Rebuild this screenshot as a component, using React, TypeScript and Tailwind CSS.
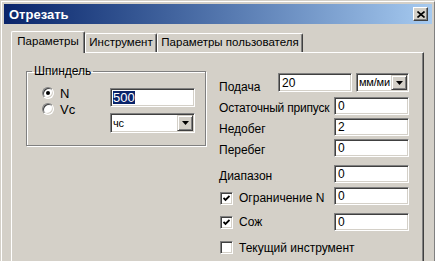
import type { ReactNode } from 'react'

const sunken =
  'bg-white border border-t-[#808080] border-l-[#808080] border-r-white border-b-white shadow-[inset_1px_1px_0_#404040,inset_-1px_-1px_0_#d4d0c8]'

function TextBox({ value, className = '' }: { value: string; className?: string }) {
  return (
    <div className={`${sunken} shrink-0 flex items-center pl-[3px] leading-none ${className}`}>
      <span>{value}</span>
    </div>
  )
}

function DropArrow() {
  return (
    <div className="w-[16px] shrink-0 h-full flex items-center justify-center bg-[#d4d0c8] border border-t-[#d4d0c8] border-l-[#d4d0c8] border-r-[#404040] border-b-[#404040] shadow-[inset_1px_1px_0_white,inset_-1px_-1px_0_#808080]">
      <svg width="7" height="4" viewBox="0 0 7 4">
        <path d="M0 0h7L3.5 4z" fill="black" />
      </svg>
    </div>
  )
}

function ComboBox({ value, className = '' }: { value: string; className?: string }) {
  return (
    <div className={`${sunken} shrink-0 flex items-stretch p-[1px] ${className}`}>
      <div className="flex-1 flex items-center pl-[1px] text-[11px] tracking-[-0.2px] leading-none overflow-hidden whitespace-nowrap">{value}</div>
      <DropArrow />
    </div>
  )
}

function Radio({ checked, label }: { checked?: boolean; label: string }) {
  return (
    <div className="flex items-center h-[16px]">
      <div className="w-[12px] h-[12px] rounded-full bg-white border border-t-[#808080] border-l-[#808080] border-r-white border-b-white shadow-[inset_1px_1px_0_#404040,inset_-1px_-1px_0_#d4d0c8] flex items-center justify-center">
        {checked && <div className="w-[4px] h-[4px] rounded-full bg-black" />}
      </div>
      <span className="ml-[6px] text-[13px] leading-none">{label}</span>
    </div>
  )
}

function Check({ checked }: { checked?: boolean }) {
  return (
    <div className={`w-[13px] h-[13px] ${sunken} flex items-center justify-center`}>
      {checked && (
        <svg width="7" height="7" viewBox="0 0 7 7">
          <polyline points="0.5,3 2.5,5 6.5,1" fill="none" stroke="black" strokeWidth="1.8" />
        </svg>
      )}
    </div>
  )
}

function Row({ label, top, children, labelOffset = 3 }: { label: ReactNode; top: string; children: ReactNode; labelOffset?: number }) {
  return (
    <div className={`flex items-center ${top}`}>
      <div className="flex-1 min-w-0 whitespace-nowrap" style={{ paddingTop: labelOffset }}>
        {label}
      </div>
      {children}
    </div>
  )
}

export default function App() {
  return (
    <div className="w-[435px] h-[261px] overflow-hidden bg-[#d4d0c8] font-['Liberation_Sans',Arial,sans-serif] text-[12px] text-black">
      <div className="w-[436px] h-[290px] border border-t-[#d4d0c8] border-l-[#d4d0c8] border-r-[#404040] border-b-[#404040]">
        <div className="h-full border border-t-white border-l-white border-r-[#808080] border-b-[#808080] p-[2px]">
          {/* Title bar */}
          <div className="h-[20px] flex items-center justify-between pl-[5px] pr-[4px] bg-gradient-to-r from-[#0a246a] to-[#a6caf0]">
            <span className="text-white font-bold text-[13px] leading-none">Отрезать</span>
            <div className="w-[15px] h-[14px] flex items-center justify-center bg-[#d4d0c8] border border-t-white border-l-white border-r-[#404040] border-b-[#404040] shadow-[inset_-1px_-1px_0_#808080]">
              <svg width="8" height="7" viewBox="0 0 8 7">
                <path d="M0.5 0.5l7 6M7.5 0.5l-7 6" stroke="black" strokeWidth="1.6" />
              </svg>
            </div>
          </div>

          <div className="pl-[7px] pr-[8px] pt-[7px]">
            {/* Tabs */}
            <div className="flex items-end h-[21px] relative z-10 whitespace-nowrap text-[11.5px]">
              <div className="w-[74px] h-[22px] mb-[-1px] flex items-center justify-center bg-[#d4d0c8] border-t border-l border-white border-r border-r-[#404040] rounded-t-[2px] shadow-[inset_-1px_0_0_#808080] pb-[2px]">
                Параметры
              </div>
              <div className="w-[72px] h-[19px] flex items-center justify-center border-t border-l border-white border-r border-r-[#404040] rounded-t-[2px] shadow-[inset_-1px_0_0_#808080]">
                Инструмент
              </div>
              <div className="w-[146px] h-[19px] flex items-center justify-center border-t border-l border-white border-r border-r-[#404040] rounded-t-[2px] shadow-[inset_-1px_0_0_#808080]">
                Параметры пользователя
              </div>
            </div>

            {/* Panel */}
            <div className="h-[240px] border-t border-l border-white border-r border-r-[#404040] shadow-[inset_-1px_0_0_#808080] flex items-start">
              <fieldset className="ml-[14px] mt-[11px] w-[180px] h-[82px] border border-[#808080] shadow-[1px_1px_0_white,inset_1px_1px_0_white] px-0 pb-0">
                <legend className="ml-[5px] px-[2px] leading-[14px]">Шпиндель</legend>
                <div className="flex">
                  <div className="w-[83px] pl-[15px] pt-[7px] flex flex-col">
                    <Radio checked label="N" />
                    <Radio label="Vc" />
                  </div>
                  <div className="pt-[10px] flex flex-col gap-[6px]">
                    <div className={`${sunken} w-[85px] h-[19px] flex items-center pl-[2px] leading-none text-[13px]`}>
                      <span className="bg-[#0a246a] text-white">500</span>
                    </div>
                    <ComboBox value="чс" className="w-[85px] h-[20px]" />
                  </div>
                </div>
              </fieldset>

              <div className="ml-[13px] w-[190px] flex flex-col">
                <Row label="Подача" top="mt-[20px] h-[19px]" labelOffset={8}>
                  <TextBox value="20" className="w-[74px] h-[19px]" />
                  <ComboBox value="мм/ми" className="ml-[4px] w-[53px] h-[19px]" />
                </Row>
                <Row label={<span className="tracking-[-0.2px]">Остаточный припуск</span>} top="mt-[5px] h-[18px]">
                  <TextBox value="0" className="w-[75px] h-[18px]" />
                </Row>
                <Row label="Недобег" top="mt-[3px] h-[18px]">
                  <TextBox value="2" className="w-[75px] h-[18px]" />
                </Row>
                <Row label="Перебег" top="mt-[3px] h-[18px]">
                  <TextBox value="0" className="w-[75px] h-[18px]" />
                </Row>
                <Row label="Диапазон" top="mt-[8px] h-[18px]">
                  <TextBox value="0" className="w-[75px] h-[18px]" />
                </Row>
                <Row
                  label={
                    <div className="flex items-center pl-[1px]">
                      <Check checked />
                      <span className="ml-[6px]">Ограничение N</span>
                    </div>
                  }
                  labelOffset={4}
                  top="mt-[4px] h-[18px]"
                >
                  <TextBox value="0" className="w-[75px] h-[18px]" />
                </Row>
                <Row
                  label={
                    <div className="flex items-center pl-[1px]">
                      <Check checked />
                      <span className="ml-[6px]">Сож</span>
                    </div>
                  }
                  labelOffset={0}
                  top="mt-[8px] h-[18px]"
                >
                  <TextBox value="0" className="w-[75px] h-[18px]" />
                </Row>
                <div className="mt-[10px] flex items-center pl-[1px] h-[13px]">
                  <Check />
                  <span className="ml-[6px] leading-none">Текущий инструмент</span>
                </div>
              </div>
            </div>
          </div>
        </div>
      </div>
    </div>
  )
}
